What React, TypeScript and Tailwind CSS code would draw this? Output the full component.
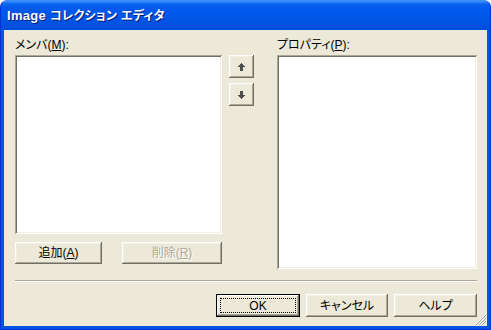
const font = "font-['Liberation_Sans','Noto_Sans_CJK_JP',sans-serif] [font-feature-settings:'palt']";

const raised =
  'shadow-[inset_-1px_-1px_0_#716f64,inset_1px_1px_0_#ffffff,inset_-2px_-2px_0_#aca899,inset_2px_2px_0_#f1efe2]';
const sunken =
  'shadow-[inset_1px_1px_0_#aca899,inset_-1px_-1px_0_#ffffff,inset_2px_2px_0_#716f64,inset_-2px_-2px_0_#f1efe2]';

function Btn({ children, className = '', disabled = false }: { children: React.ReactNode; className?: string; disabled?: boolean }) {
  return (
    <div
      className={`flex items-center justify-center bg-[#ece9d8] text-[12px] leading-none ${raised} ${
        disabled ? 'text-[#aca899]' : 'text-black'
      } ${className}`}
    >
      {children}
    </div>
  )
}

function Arrow({ down = false }: { down?: boolean }) {
  return (
    <svg width="7" height="8" viewBox="0 0 7 8" className={down ? 'rotate-180' : ''}>
      <path d="M3 0h1v1h1v1h1v1h1v1H5v4H2V4H0V3h1V2h1V1h1z" fill="#4d4d4d" />
    </svg>
  )
}

export default function App() {
  return (
    <div className={`w-[491px] h-[330px] flex flex-col rounded-t-[7px] bg-[#0055e5] border border-[#0831d9] border-t-[#3c8cf8] ${font}`}>
      <div className="h-[29px] shrink-0 rounded-t-[6px] bg-[linear-gradient(to_bottom,#3d95ff_0%,#0a63f0_10%,#0058ee_30%,#0054e3_70%,#004ddc_100%)] flex items-center pl-[6px]">
        <span className="text-white font-bold text-[13px] tracking-[0.3px] [text-shadow:1px_1px_0_#0a1874]">
          Image <span className="text-[12px]">コレクション エディタ</span>
        </span>
      </div>

      <div className="relative flex-1 mx-[3px] mb-[3px] bg-[#ece9d8] flex flex-col pl-[11px] pr-[10px] pt-[8px]">
        <div className="flex">
          <div className="w-[207px] flex flex-col">
            <div className="h-[17px] text-[12px] leading-[14px] text-black">
              メンバ(<span className="underline">M</span>):
            </div>
            <div className={`h-[179px] bg-white ${sunken}`} />
            <div className="flex justify-between mt-[8px]">
              <Btn className="w-[87px] h-[22px]">
                追加(<span className="underline">A</span>)
              </Btn>
              <Btn className="w-[100px] h-[22px]" disabled>
                <span className="[text-shadow:1px_1px_0_#ffffff]">
                  削除(<span className="underline">R</span>)
                </span>
              </Btn>
            </div>
          </div>

          <div className="ml-[7px] pt-[17px] flex flex-col gap-[5px]">
            <Btn className="w-[25px] h-[23px]">
              <Arrow />
            </Btn>
            <Btn className="w-[25px] h-[23px]">
              <Arrow down />
            </Btn>
          </div>

          <div className="ml-[23px] flex-1 flex flex-col">
            <div className="h-[17px] text-[12px] leading-[14px] text-black">
              プロパティ(<span className="underline">P</span>):
            </div>
            <div className={`h-[214px] bg-white ${sunken}`} />
          </div>
        </div>

        <div className="mt-[11px] h-[2px] border-t border-[#aca899] border-b border-b-white" />

        <div className="mt-[12px] flex justify-end gap-[6px]">
          <div className="w-[84px] h-[23px] border border-black">
            <Btn className="w-full h-full relative">
              <span className="absolute inset-[3px] border border-dotted border-black" />
              <span className="relative">OK</span>
            </Btn>
          </div>
          <Btn className="w-[82px] h-[23px]">キャンセル</Btn>
          <Btn className="w-[83px] h-[23px]">ヘルプ</Btn>
        </div>

        <svg className="absolute right-[1px] bottom-[1px]" width="11" height="11" viewBox="0 0 11 11">
          <path d="M10 1L1 10M10 4L4 10M10 7L7 10" stroke="#ffffff" strokeWidth="1" />
          <path d="M11 1L1 11M11 4L4 11M11 7L7 11" stroke="#aca899" strokeWidth="1" />
        </svg>
      </div>
    </div>
  )
}
